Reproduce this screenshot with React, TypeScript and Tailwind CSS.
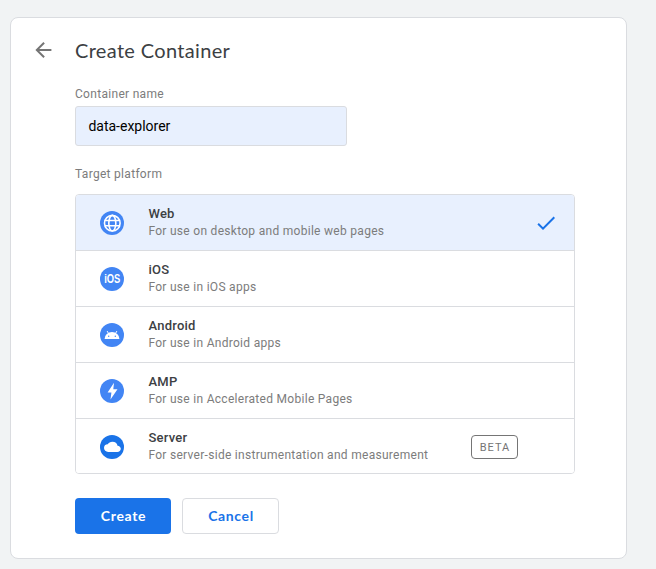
import type { ReactNode } from "react";

const disc = "#4285f4";

const WebIcon = () => (
  <svg width="24" height="24" viewBox="0 0 24 24" className="block">
    <circle cx="12" cy="12" r="12" fill={disc} />
    <g fill="none" stroke="#fff" strokeWidth="1.6">
      <circle cx="12.3" cy="12.2" r="7.8" />
      <ellipse cx="12.3" cy="12.2" rx="3.5" ry="7.8" />
      <path d="M5 9.5h14.6M5 14.7h14.6" />
    </g>
  </svg>
);

const IosIcon = () => (
  <span className="flex size-6 items-center justify-center rounded-full bg-[#4285f4] text-white">
    <span className="block scale-x-[0.78] pl-px font-['Liberation_Sans',sans-serif] text-[12px] leading-[14px] font-bold">
      iOS
    </span>
  </span>
);

const AndroidIcon = () => (
  <svg width="24" height="24" viewBox="0 0 24 24" className="block">
    <circle cx="12" cy="12" r="12" fill={disc} />
    <path d="M4.6 16a7.4 6.9 0 0 1 14.8 0z" fill="#fff" />
    <path d="M8.6 10.6 7.3 8.4M15.4 10.6l1.3-2.2" stroke="#fff" strokeWidth="1" strokeLinecap="round" />
    <circle cx="8.7" cy="13.3" r="0.7" fill={disc} />
    <circle cx="15.3" cy="13.3" r="0.7" fill={disc} />
  </svg>
);

const AmpIcon = () => (
  <svg width="24" height="24" viewBox="0 0 24 24" className="block">
    <circle cx="12" cy="12" r="12" fill={disc} />
    <path d="M14 3.8 7.6 13.6h3.8l-.9 6.8 7-10.2h-4.2z" fill="#fff" />
  </svg>
);

const ServerIcon = () => (
  <svg width="24" height="24" viewBox="0 0 24 24" className="block">
    <circle cx="12" cy="12" r="12" fill="#1a73e8" />
    <path
      transform="translate(4 4.3) scale(.7 .63)"
      d="M19.35 10.04A7.49 7.49 0 0 0 12 4C9.11 4 6.6 5.64 5.35 8.04A5.994 5.994 0 0 0 0 14c0 3.31 2.69 6 6 6h13c2.76 0 5-2.24 5-5 0-2.64-2.05-4.78-4.65-4.96z"
      fill="#fff"
    />
  </svg>
);

type Platform = { name: string; text: string; icon: ReactNode; selected?: boolean; beta?: boolean };

const platforms: Platform[] = [
  { name: "Web", text: "For use on desktop and mobile web pages", icon: <WebIcon />, selected: true },
  { name: "iOS", text: "For use in iOS apps", icon: <IosIcon /> },
  { name: "Android", text: "For use in Android apps", icon: <AndroidIcon /> },
  { name: "AMP", text: "For use in Accelerated Mobile Pages", icon: <AmpIcon /> },
  { name: "Server", text: "For server-side instrumentation and measurement", icon: <ServerIcon />, beta: true },
];

function PlatformRow({ name, text, icon, selected, beta }: Platform) {
  return (
    <li
      className={
        "flex h-14 items-start border-b border-[#dadce0] pl-6 last:h-[54px] last:border-b-0 " +
        (selected ? "bg-[#e8f0fe]" : "bg-white")
      }
    >
      <div className="mt-4 w-6">{icon}</div>
      <div className="ml-6 w-[323px] pt-[10px] pl-[0.4px]">
        <div className="text-[13px] leading-[17px] font-medium tracking-[0.25px] text-[#3c4043]">{name}</div>
        <div className="text-[12px] leading-[19px] tracking-[0.29px] whitespace-nowrap text-[#7c7c7c]">{text}</div>
      </div>
      {beta && (
        <span className="mt-4 flex h-6 w-[47px] items-center justify-center rounded-[4px] border border-[#757575] pt-px pl-px text-[11px] leading-none tracking-[1px] text-[#757575]">
          BETA
        </span>
      )}
      {selected && (
        <svg width="24" height="24" viewBox="0 0 24 24" className="mt-4 ml-[63px]">
          <path d="M9 16.17 4.83 12l-1.42 1.41L9 19 21 7l-1.41-1.41z" fill="#1a73e8" />
        </svg>
      )}
    </li>
  );
}

export default function App() {
  return (
    <div className="h-[569px] w-[656px] overflow-hidden bg-[#f1f3f4] pt-[17px] pl-[10px] font-['Roboto',sans-serif]">
      <main className="h-[542px] w-[617px] rounded-[8px] border border-[#dadce0] bg-white pl-[64px]">
        <header className="-ml-[44px] flex h-[67px] items-center pb-[3px]">
          <button aria-label="Back" className="mr-[20px] block size-6">
            <svg width="24" height="24" viewBox="0 0 24 24">
              <path transform="translate(.4 0)" d="M20 11H7.83l5.59-5.59L12 4l-8 8 8 8 1.41-1.41L7.83 13H20z" fill="#757575" />
            </svg>
          </button>
          <h1 className="font-['Lato',sans-serif] text-[20px] leading-6 tracking-[0.34px] text-[#3c4043]">Create Container</h1>
        </header>
        <label className="block pt-px text-[12px] leading-4 tracking-[0.3px] text-[#7c7c7c]" htmlFor="name">
          Container name
        </label>
        <input
          id="name"
          defaultValue="data-explorer"
          className="mt-[4px] block h-10 w-[272px] rounded-[3px] border border-[#dadce0] bg-[#e8f0fe] px-[12.4px] text-[14px] text-black outline-none"
        />
        <div className="mt-5 text-[12px] leading-4 tracking-[0.3px] text-[#7c7c7c]">Target platform</div>
        <ul className="mt-3 h-[280px] w-[500px] overflow-hidden rounded-[4px] border border-[#dadce0]">
          {platforms.map((p) => (
            <PlatformRow key={p.name} {...p} />
          ))}
        </ul>
        <div className="mt-6 flex gap-[11px] font-['Lato',sans-serif] text-[14px] font-bold">
          <button className="h-9 w-24 rounded-[4px] bg-[#1a73e8] pb-[2px] pl-px tracking-[0.65px] text-white">Create</button>
          <button className="h-9 w-[97px] rounded-[4px] border border-[#dadce0] pb-[2px] pl-px tracking-[0.65px] text-[#1a73e8]">Cancel</button>
        </div>
      </main>
    </div>
  );
}
